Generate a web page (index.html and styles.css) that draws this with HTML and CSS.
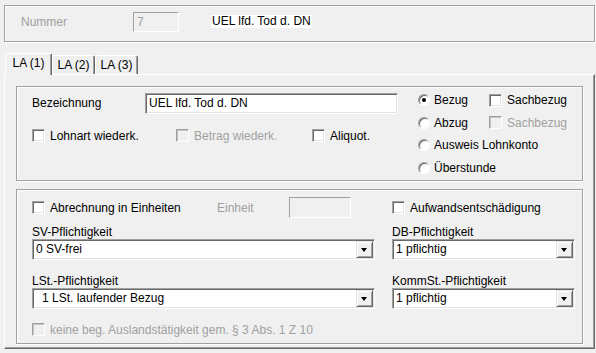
FILE: index.html
```html
<!DOCTYPE html>
<html lang="de">
<head>
    <meta charset="UTF-8">
    <meta name="viewport" content="width=device-width, initial-scale=1.0">
    <title>Lohnart</title>
    <link rel="stylesheet" href="styles.css">
</head>
<body>
    <section class="kopf">
        <span class="kopf-label grau">Nummer</span>
        <span class="feld feld-aus nummer">7</span>
        <span class="kopf-name">UEL lfd. Tod d. DN</span>
    </section>

    <ul class="reiter">
        <li class="aktiv">LA (1)</li>
        <li>LA (2)</li>
        <li>LA (3)</li>
    </ul>

    <section class="seite">
        <!-- Bezeichnung + Art der Lohnart -->
        <div class="gruppe gruppe-art">
            <div class="art-links">
                <div class="zeile">
                    <span class="art-label">Bezeichnung</span>
                    <span class="feld bezeichnung">UEL lfd. Tod d. DN</span>
                </div>
                <div class="zeile checks">
                    <label class="check c1"><span class="box"></span>Lohnart wiederk.</label>
                    <label class="check c2 aus"><span class="box"></span>Betrag wiederk.</label>
                    <label class="check"><span class="box"></span>Aliquot.</label>
                </div>
            </div>
            <div class="art-rechts">
                <label class="radio"><span class="kreis an"></span>Bezug</label>
                <label class="check"><span class="box"></span>Sachbezug</label>
                <label class="radio"><span class="kreis"></span>Abzug</label>
                <label class="check aus"><span class="box"></span>Sachbezug</label>
                <label class="radio breit"><span class="kreis"></span>Ausweis Lohnkonto</label>
                <label class="radio breit"><span class="kreis"></span>Überstunde</label>
            </div>
        </div>

        <!-- Pflichtigkeiten -->
        <div class="gruppe gruppe-pflicht">
            <div class="reihe">
                <div class="einheiten">
                    <label class="check c-einheiten"><span class="box"></span>Abrechnung in Einheiten</label>
                    <span class="einheit-label grau">Einheit</span>
                    <span class="feld feld-aus einheit"></span>
                </div>
                <label class="check"><span class="box"></span>Aufwandsentschädigung</label>
            </div>
            <div class="reihe felder">
                <div>
                    <div class="feld-titel">SV-Pflichtigkeit</div>
                    <div class="feld auswahl"><span>0 SV-frei</span><span class="pfeil"></span></div>
                </div>
                <div>
                    <div class="feld-titel">DB-Pflichtigkeit</div>
                    <div class="feld auswahl"><span>1 pflichtig</span><span class="pfeil"></span></div>
                </div>
                <div>
                    <div class="feld-titel">LSt.-Pflichtigkeit</div>
                    <div class="feld auswahl"><span class="eingerueckt">1 LSt. laufender Bezug</span><span class="pfeil"></span></div>
                </div>
                <div>
                    <div class="feld-titel">KommSt.-Pflichtigkeit</div>
                    <div class="feld auswahl"><span>1 pflichtig</span><span class="pfeil"></span></div>
                </div>
            </div>
            <label class="check aus ausland"><span class="box"></span>keine beg. Auslandstätigkeit gem. § 3 Abs. 1 Z 10</label>
        </div>
    </section>
</body>
</html>
```

FILE: styles.css
```css
* {
    box-sizing: border-box;
}

body {
    margin: 0;
    width: 596px;
    height: 353px;
    overflow: hidden;
    background-color: #f0f0f0;
    font-family: "Liberation Sans", Arial, sans-serif;
    font-size: 12px;
    color: #000;
}

.grau {
    color: #a0a0a0;
}

/* geaetzter Rahmen wie bei Windows-Gruppenfeldern */
.kopf,
.gruppe {
    border: 1px solid #a0a0a0;
    box-shadow: inset 1px 1px 0 #fff, 1px 1px 0 #fff;
}

.kopf {
    display: flex;
    align-items: flex-start;
    height: 37px;
    margin: 5px 1px 0 4px;
    padding: 6px 0 0 16px;
}

.kopf-label {
    width: 112px;
    line-height: 20px;
}

.kopf-name {
    margin: 3px 0 0 32px;
    padding: 0 1px;
    line-height: 13px;
    background-color: #fff;
}

/* vertiefte Eingabefelder */
.feld {
    display: block;
    height: 21px;
    padding: 0 3px;
    line-height: 19px;
    white-space: nowrap;
    border: 1px solid;
    border-color: #a0a0a0 #fff #fff #a0a0a0;
    box-shadow: inset 1px 1px 0 #696969, inset -1px -1px 0 #e3e3e3;
    background-color: #fff;
}

.feld-aus {
    color: #a0a0a0;
    background-color: #f0f0f0;
    box-shadow: none;
}

.nummer {
    width: 46px;
    height: 20px;
    line-height: 18px;
}

/* Reiter */
.reiter {
    list-style-type: none;
    display: flex;
    align-items: flex-end;
    height: 21px;
    margin: 11px 0 0 5px;
    padding: 0;
}

.reiter li {
    width: 43px;
    height: 19px;
    padding-top: 2px;
    line-height: 14px;
    text-align: center;
    border: 1px solid #fff;
    border-right-color: #696969;
    border-bottom: none;
    border-radius: 2px 2px 0 0;
    box-shadow: inset -1px 0 0 #a0a0a0;
}

.reiter li.aktiv {
    position: relative;
    width: 47px;
    height: 22px;
    margin-bottom: -1px;
    background-color: #f0f0f0;
}

.seite {
    height: 275px;
    margin: 0 1px 0 4px;
    padding: 11px;
    border: 1px solid #fff;
    border-right-color: #696969;
    border-bottom-color: #696969;
    box-shadow: inset -1px -1px 0 #a0a0a0;
}

/* Checkboxen und Optionsfelder */
.check,
.radio {
    display: flex;
    align-items: center;
    white-space: nowrap;
}

.check {
    gap: 5px;
    height: 13px;
}

.radio {
    gap: 4px;
}

.box {
    flex: none;
    width: 13px;
    height: 13px;
    border: 1px solid;
    border-color: #a0a0a0 #fff #fff #a0a0a0;
    box-shadow: inset 1px 1px 0 #696969, inset -1px -1px 0 #e3e3e3;
    background-color: #fff;
}

.check.aus {
    color: #a0a0a0;
}

.check.aus .box {
    background-color: #f0f0f0;
    box-shadow: inset 1px 1px 0 #c4c4c4;
}

.kreis {
    position: relative;
    flex: none;
    width: 12px;
    height: 12px;
    border-radius: 50%;
    border: 1px solid;
    border-color: #a0a0a0 #fff #fff #a0a0a0;
    box-shadow: inset 1px 1px 0 #696969;
    background-color: #fff;
}

.kreis.an::after {
    content: "";
    position: absolute;
    left: 3px;
    top: 3px;
    width: 4px;
    height: 4px;
    border-radius: 50%;
    background-color: #000;
}

/* obere Gruppe */
.gruppe-art {
    display: flex;
    align-items: flex-start;
    height: 95px;
    padding: 2px 0 0 15px;
}

.art-links {
    width: 366px;
    margin-top: 4px;
}

.zeile {
    display: flex;
    align-items: center;
}

.art-label {
    width: 113px;
    line-height: 21px;
}

.bezeichnung {
    width: 253px;
}

.checks {
    margin-top: 15px;
}

.c1 {
    width: 144px;
}

.c2 {
    width: 136px;
}

.art-rechts {
    display: grid;
    grid-template-columns: 71px auto;
    grid-auto-rows: 22.5px;
    align-items: center;
    margin-left: 20px;
}

.radio.breit {
    grid-column: 1 / -1;
}

/* untere Gruppe */
.gruppe-pflicht {
    height: 155px;
    margin-top: 8px;
    padding: 7px 0 0 15px;
}

.reihe {
    display: grid;
    grid-template-columns: 343px 183px;
    column-gap: 17px;
    align-items: center;
}

.einheiten {
    display: flex;
    align-items: center;
    height: 21px;
}

.c-einheiten {
    width: 185px;
}

.einheit-label {
    width: 72px;
}

.einheit {
    width: 62px;
}

.felder {
    row-gap: 14px;
    margin-top: 7px;
}

.feld-titel {
    line-height: 14px;
}

.auswahl {
    display: flex;
    align-items: center;
    padding: 0 1px 0 3px;
}

.auswahl span:first-child {
    flex: 1;
}

.eingerueckt {
    padding-left: 6px;
}

.pfeil {
    position: relative;
    flex: none;
    width: 17px;
    height: 17px;
    border: 1px solid;
    border-color: #e3e3e3 #696969 #696969 #e3e3e3;
    box-shadow: inset 1px 1px 0 #fff, inset -1px -1px 0 #a0a0a0;
    background-color: #f0f0f0;
}

.pfeil::after {
    content: "";
    position: absolute;
    left: 4px;
    top: 6px;
    border-top: 4px solid #000;
    border-left: 3.5px solid transparent;
    border-right: 3.5px solid transparent;
}

.ausland {
    margin-top: 14px;
}
```
